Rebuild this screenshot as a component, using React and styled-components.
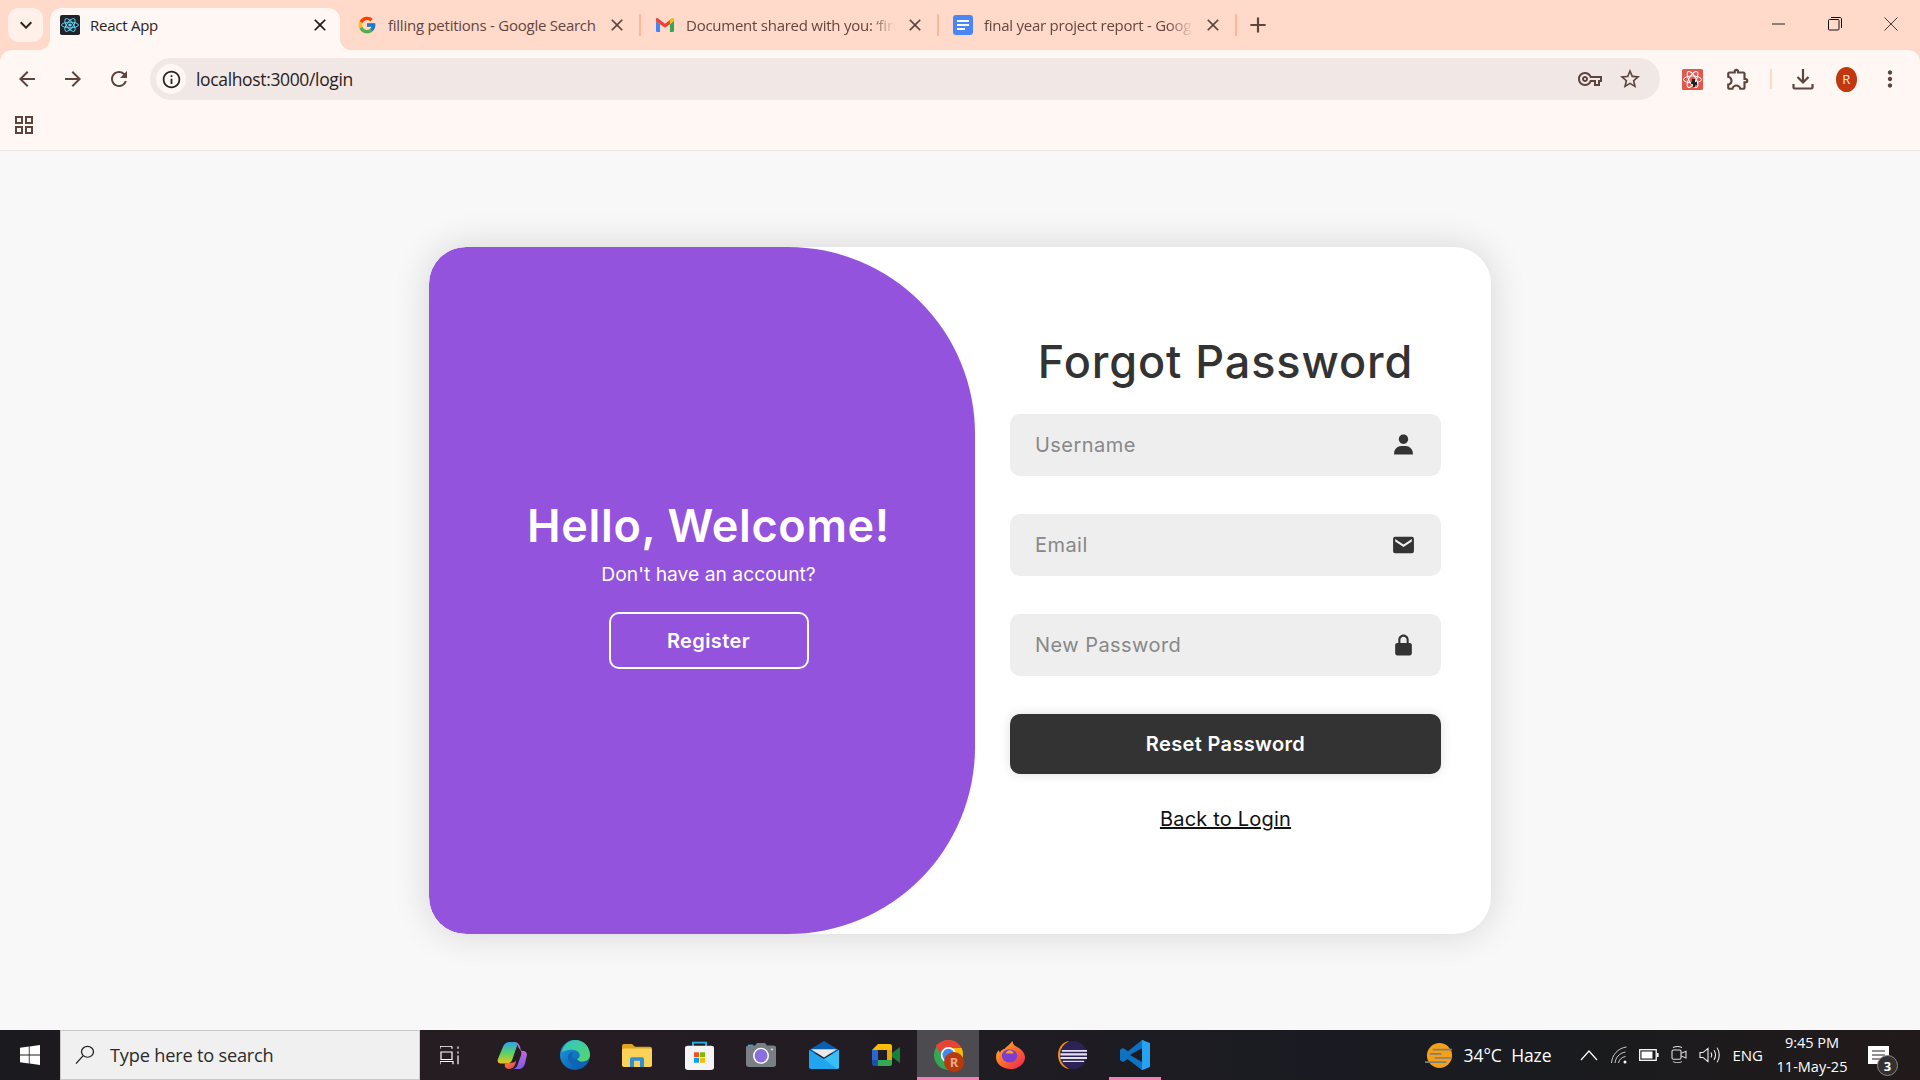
import React from 'react'
import styled, { createGlobalStyle } from 'styled-components'
import { BiSolidUser, BiSolidEnvelope, BiSolidLockAlt } from 'react-icons/bi'
import { FcGoogle } from 'react-icons/fc'
import {
  MdArrowBack, MdArrowForward, MdRefresh, MdInfoOutline, MdStarBorder, MdOutlineExtension,
  MdMoreVert, MdClose, MdAdd, MdOutlineVpnKey, MdKeyboardArrowDown, MdOutlineGridView,
} from 'react-icons/md'

const chromeFont = '"Open Sans", "Noto Sans", sans-serif'
const pageFont = 'Inter, "Open Sans", sans-serif'

const Global = createGlobalStyle`
  html, body { margin: 0; padding: 0; height: 100%; overflow: hidden; }
  * { box-sizing: border-box; }
  input::placeholder { color: #888; opacity: 1; }
`

const Screen = styled.div`
  width: 1920px;
  height: 1080px;
  display: flex;
  flex-direction: column;
  background: #f8f8f8;
  overflow: hidden;
`
const Browser = styled.div`
  background: #ffd9ca;
  flex: none;
`
const TabStrip = styled.div`
  height: 50px;
  display: flex;
  align-items: flex-end;
  padding-left: 8px;
  font-family: ${chromeFont};
`
const TabMenu = styled.div`
  width: 35px;
  height: 34px;
  margin: 0 7px 8px 0;
  border-radius: 10px;
  background: #fff0ea;
  display: flex;
  align-items: center;
  justify-content: center;
  color: #2a2220;
  font-size: 24px;
`
const Tab = styled.div`
  position: relative;
  width: ${p => (p.$active ? '290px' : '298px')};
  height: 42px;
  display: flex;
  align-items: center;
  padding: 0 ${p => (p.$active ? '10px' : '11px')} 8px ${p => (p.$active ? '10px' : '17px')};
  background: ${p => (p.$active ? '#fff7f4' : 'transparent')};
  border-radius: 12px 12px 0 0;
  color: ${p => (p.$active ? '#2a2220' : '#63463e')};
  &::before, &::after {
    content: ${p => (p.$active ? '""' : 'none')};
    position: absolute;
    bottom: 0;
    width: 12px;
    height: 12px;
  }
  &::before { left: -12px; background: radial-gradient(circle at 0 0, transparent 12px, #fff7f4 12.5px); }
  &::after { right: -12px; background: radial-gradient(circle at 100% 0, transparent 12px, #fff7f4 12.5px); }
`
const Favicon = styled.span`
  width: 20px;
  height: 20px;
  flex: none;
  display: flex;
  align-items: center;
  justify-content: center;
`
const TabTitle = styled.span`
  flex: 1;
  min-width: 0;
  margin-left: ${p => (p.$active ? '10px' : '11px')};
  font-size: 15px;
  white-space: nowrap;
  overflow: hidden;
  letter-spacing: -0.25px;
  ${p => p.$fade && `mask-image: linear-gradient(90deg, #000 88%, transparent 100%);`}
`
const TabClose = styled.span`
  flex: none;
  display: flex;
  font-size: 20px;
  margin-left: 10px;
  color: ${p => (p.$active ? '#1c1716' : '#5d443c')};
`
const TabSep = styled.span`
  flex: none;
  width: 2px;
  height: 22px;
  margin: 0 -3px 14px 1px;
  background: #ffb79c;
`
const NewTab = styled.span`
  display: flex;
  font-size: 26px;
  color: #5d443c;
  margin: 0 0 12px 11px;
`
const WindowControls = styled.div`
  margin: 0 0 0 auto;
  align-self: stretch;
  display: flex;
  align-items: center;
  padding: 0 22px 2px 0;
  gap: 42px;
`
const Toolbar = styled.div`
  height: 50px;
  display: flex;
  align-items: center;
  background: #fff7f4;
  border-radius: 12px 12px 0 0;
  padding: 8px 15px 0 15px;
  color: #5d443c;
  font-family: ${chromeFont};
`
const NavIcon = styled.span`
  width: 24px;
  height: 24px;
  margin-right: 22px;
  font-size: 24px;
  display: flex;
  align-items: center;
  justify-content: center;
  &:nth-child(3) { margin-right: 19px; }
`
const Omnibox = styled.div`
  flex: none;
  width: 1510px;
  height: 42px;
  border-radius: 21px;
  background: #f1e7e5;
  display: flex;
  align-items: center;
  padding: 0 18px 0 6px;
`
const InfoBadge = styled.span`
  width: 30px;
  height: 30px;
  border-radius: 50%;
  background: #fff7f4;
  display: flex;
  align-items: center;
  justify-content: center;
  font-size: 21px;
  color: #2a2220;
`
const UrlText = styled.span`
  margin-left: 10px;
  font-size: 17.5px;
  letter-spacing: -0.35px;
  color: #2a2220;
  flex: 1;
`
const OmniIcon = styled.span`
  display: flex;
  font-size: 24px;
  margin-left: 16px;
  color: #5d443c;
`
const ToolIcon = styled.span`
  flex: none;
  width: 30px;
  height: 30px;
  display: flex;
  align-items: center;
  justify-content: center;
  font-size: 26px;
`
const ExtensionBox = styled(ToolIcon)`
  margin-left: 17px;
`
const PuzzleBox = styled(ToolIcon)`
  margin-left: 16px;
`
const ToolSep = styled.span`
  width: 2px;
  height: 20px;
  margin: 0 16px 0 17px;
  background: #ffd9ca;
`
const Avatar = styled.span`
  width: 25px;
  height: 25px;
  margin: 0 18px 0 18px;
  border-radius: 50%;
  background: #c1370f;
  color: #ffe7dc;
  font-size: 13px;
  display: flex;
  align-items: center;
  justify-content: center;
  font-family: ${chromeFont};
`
const BookmarkBar = styled.div`
  height: 51px;
  display: flex;
  align-items: center;
  padding: 0 0 0 12px;
  background: #fff7f4;
  border-bottom: 1px solid #ece4e1;
  color: #5d443c;
  font-size: 24px;
`

const Main = styled.main`
  flex: 1;
  min-height: 0;
  display: flex;
  align-items: center;
  justify-content: center;
  font-family: ${pageFont};
`
const Card = styled.section`
  width: 1062px;
  height: 687px;
  background: #fff;
  border-radius: 37px;
  box-shadow: 0 0 37px rgba(0, 0, 0, 0.14);
  display: flex;
  overflow: hidden;
`
const WelcomePanel = styled.div`
  flex: none;
  width: 546px;
  background: #9353dd;
  border-radius: 37px 187px 187px 37px;
  color: #fff;
  display: flex;
  flex-direction: column;
  align-items: center;
  justify-content: center;
  padding: 0 0 13px 13px;
`
const WelcomeTitle = styled.h1`
  margin: 0;
  font-size: 45px;
  line-height: 54px;
  font-weight: 600;
  letter-spacing: 0.65px;
`
const WelcomeText = styled.p`
  margin: 9px 0 26px;
  font-size: 19.3px;
  line-height: 24px;
`
const OutlineButton = styled.button`
  width: 200px;
  height: 57px;
  border: 2.5px solid #fff;
  border-radius: 10px;
  background: transparent;
  color: #fff;
  font: 600 20px ${pageFont};
  letter-spacing: 0.4px;
`
const FormPanel = styled.form`
  flex: 1;
  padding: 88px 50px 0 35px;
  display: flex;
  flex-direction: column;
  text-align: center;
`
const FormTitle = styled.h1`
  margin: 0 0 25px;
  font-size: 45px;
  line-height: 54px;
  font-weight: 500;
  letter-spacing: 0.9px;
  color: #333;
`
const Field = styled.div`
  position: relative;
  margin-bottom: 38px;
`
const FieldInput = styled.input`
  display: block;
  width: 100%;
  height: 62px;
  border: 0;
  outline: 0;
  border-radius: 10px;
  background: #eee;
  padding: 0 60px 0 25px;
  font: 400 20px ${pageFont};
  letter-spacing: 0.45px;
  color: #333;
`
const FieldIcon = styled.span`
  position: absolute;
  top: 50%;
  right: 25px;
  transform: translateY(-50%);
  display: flex;
  font-size: 25px;
  color: #333;
`
const SubmitButton = styled.button`
  height: 60px;
  border: 0;
  border-radius: 10px;
  background: #333;
  color: #fff;
  font: 600 20px ${pageFont};
  letter-spacing: 0.35px;
  box-shadow: 0 0 12px rgba(0, 0, 0, 0.12);
`
const BackLink = styled.a`
  margin-top: 31px;
  font-size: 20px;
  line-height: 28px;
  letter-spacing: 0.2px;
  color: #111;
  text-decoration: underline;
`

const Taskbar = styled.footer`
  flex: none;
  height: 50px;
  display: flex;
  background: linear-gradient(90deg, #1b1a1f 0%, #261d22 25%, #201c22 50%, #1a1b22 70%, #1b1b1e 85%, #221a1a 100%);
  color: #fff;
  font-family: ${chromeFont};
`
const StartButton = styled.div`
  width: 60px;
  display: flex;
  align-items: center;
  justify-content: center;
`
const SearchBox = styled.div`
  width: 360px;
  margin-right: -1px;
  background: #f0f0f0;
  border: 1px solid #c8c8c8;
  display: flex;
  align-items: center;
  padding-left: 14px;
  color: #2b2b2b;
  font-size: 18.2px;
  letter-spacing: -0.2px;
`
const SearchText = styled.span`
  margin-left: 15px;
`
const AppSlot = styled.div`
  position: relative;
  flex: none;
  width: 62.25px;
  display: flex;
  align-items: center;
  justify-content: center;
  background: ${p => (p.$active ? '#4d4b50' : 'transparent')};
  &::after {
    content: ${p => (p.$active || p.$running ? '""' : 'none')};
    position: absolute;
    bottom: 0;
    left: ${p => (p.$active ? '0' : '5px')};
    right: ${p => (p.$active ? '0' : '5px')};
    height: 3px;
    background: #f47fb4;
  }
`
const ChromeBadge = styled.span`
  position: absolute;
  left: 27px;
  top: 22px;
  width: 20px;
  height: 20px;
  border-radius: 50%;
  background: #b8390c;
  color: #e8a88e;
  font: 700 13px ${chromeFont};
  display: flex;
  align-items: center;
  justify-content: center;
`
const Tray = styled.div`
  margin-left: auto;
  display: flex;
  align-items: center;
  padding-right: 24px;
  font-size: 17.5px;
`
const WeatherText = styled.span`
  margin: 0 23px 0 10px;
  letter-spacing: -0.1px;
  word-spacing: 5px;
  white-space: nowrap;
`
const TrayIcon = styled.span`
  width: 30px;
  display: flex;
  justify-content: center;
`
const Lang = styled.span`
  margin-left: 8px;
  font-size: 15px;
`
const Clock = styled.div`
  margin: 0 20px 0 13px;
  width: 72px;
  font-size: 14.5px;
  line-height: 24px;
  text-align: center;
  white-space: nowrap;
`
const Notify = styled.div`
  position: relative;
  width: 28px;
  display: flex;
`
const NotifyCount = styled.span`
  position: absolute;
  left: 9px;
  top: 9px;
  width: 21px;
  height: 21px;
  border-radius: 50%;
  background: #33302f;
  border: 1px solid #8a8a8a;
  font: 700 13px ${chromeFont};
  display: flex;
  align-items: center;
  justify-content: center;
`

const ReactIcon = () => (
  <svg width="20" height="20" viewBox="0 0 20 24" preserveAspectRatio="none">
    <rect width="20" height="24" rx="2" fill="#20232a" />
    <g fill="none" stroke="#61dafb" strokeWidth="1">
      <ellipse cx="10" cy="12" rx="8.5" ry="3.4" />
      <ellipse cx="10" cy="12" rx="8.5" ry="3.4" transform="rotate(60 10 12)" />
      <ellipse cx="10" cy="12" rx="8.5" ry="3.4" transform="rotate(120 10 12)" />
    </g>
    <circle cx="10" cy="12" r="1.8" fill="#61dafb" />
  </svg>
)
const GmailIcon = () => (
  <svg width="18" height="14" viewBox="0 0 20 16" preserveAspectRatio="none">
    <path d="M0 3v11.5C0 15.3.7 16 1.5 16H4.5V7z" fill="#4285f4" />
    <path d="M20 3v11.5c0 .8-.7 1.5-1.5 1.5h-3V7z" fill="#34a853" />
    <path d="M15.5 7V1.5L18 .3c.9-.6 2-.1 2 1.2V3z" fill="#fbbc04" />
    <path d="M4.5 7 0 3V1.5C0 .2 1.1-.3 2 .3L10 6.5 18 .3 15.5 2V7L10 11z" fill="#ea4335" />
  </svg>
)
const DocsIcon = () => (
  <svg width="20" height="20" viewBox="0 0 20 20">
    <rect width="20" height="20" rx="3" fill="#4a86f5" />
    <path d="M4 5h12v2H4zM4 9h12v2H4zM4 13h8v2H4z" fill="#fff" />
  </svg>
)
const Minimize = () => (
  <svg width="14" height="14" viewBox="0 0 14 14"><path d="M0 7h13" stroke="#222" strokeWidth="1" /></svg>
)
const Restore = () => (
  <svg width="14" height="14" viewBox="0 0 14 14" fill="none" stroke="#111" strokeWidth="1">
    <rect x=".5" y="2.5" width="10.5" height="10.5" rx="1" />
    <path d="M3 .5h9c.8 0 1.5.7 1.5 1.5v9" />
  </svg>
)
const CloseX = () => (
  <svg width="14" height="14" viewBox="0 0 14 14"><path d="M.5.5l13 13M13.5.5l-13 13" stroke="#4b3832" strokeWidth="1" /></svg>
)
const AtomExtension = () => (
  <svg width="21" height="21" viewBox="0 0 21 21">
    <rect width="21" height="21" rx="1.5" fill="#e2574c" />
    <g fill="none" stroke="#fff" strokeWidth="1">
      <ellipse cx="10.5" cy="10.5" rx="9" ry="3.5" />
      <ellipse cx="10.5" cy="10.5" rx="9" ry="3.5" transform="rotate(60 10.5 10.5)" />
      <ellipse cx="10.5" cy="10.5" rx="9" ry="3.5" transform="rotate(120 10.5 10.5)" />
    </g>
    <path d="M10 10h3v3h2v3h-2v2h-2v-3h-2v-2h1z" fill="#222" />
  </svg>
)
const DownloadIcon = () => (
  <svg width="22" height="22" viewBox="0 0 22 22" fill="none" stroke="#5d443c" strokeWidth="2.2">
    <path d="M11 1v13M5.5 9 11 14.5 16.5 9" />
    <path d="M1.5 16v3.5c0 .5.5 1 1 1h17c.5 0 1-.5 1-1V16" />
  </svg>
)
const WindowsLogo = () => (
  <svg width="20" height="20" viewBox="0 0 20 20" fill="#fff">
    <path d="M0 2.8 8.8 1.500v8H0zM9.600 1.400 20 0v9.500H9.600zM0 10.400h8.800v8.100L0 17.200zM9.600 10.400H20V20L9.600 18.600z" />
  </svg>
)
const SearchGlass = () => (
  <svg width="20" height="20" viewBox="0 0 20 22" fill="none" stroke="#222" strokeWidth="1.3" preserveAspectRatio="none">
    <circle cx="12.5" cy="7.5" r="6" />
    <path d="M8 12 1 20.5" />
  </svg>
)
const TaskView = () => (
  <svg width="20" height="19" viewBox="0 0 20 24" fill="none" stroke="#fff" strokeWidth="1.2" preserveAspectRatio="none">
    <path d="M0 .5h12M12 .5v3M0 .5v3M1 7.5h11v9.500H1zM0 21v-1.500h13V23M0 19.500V23M18 .5v3M18 7v2.500M18 12v11" />
  </svg>
)
const Copilot = () => (
  <svg width="30" height="27" viewBox="0 0 30 34" preserveAspectRatio="none">
    <defs>
      <linearGradient id="cp1" x1="0" y1="0" x2="0" y2="1"><stop offset="0" stopColor="#2aa7e8" /><stop offset=".55" stopColor="#5fd35f" /><stop offset="1" stopColor="#f2c21b" /></linearGradient>
      <linearGradient id="cp2" x1="0" y1="0" x2="0" y2="1"><stop offset="0" stopColor="#e86cd2" /><stop offset="1" stopColor="#7c5ce8" /></linearGradient>
      <linearGradient id="cp3" x1="0" y1="0" x2="1" y2="1"><stop offset="0" stopColor="#f58a2a" /><stop offset="1" stopColor="#e63a6a" /></linearGradient>
    </defs>
    <path d="M12 0h5c3 0 3 3 3 5l-5 18c-1 3-3 4-6 4H4c-3 0-4-3-3-6L6 6c1-3 3-6 6-6z" fill="url(#cp1)" />
    <path d="M17 0c3 0 5 2 6 6l1 5 1 0c3 0 5 2 5 5l-2 11c-1 4-3 7-7 7h-6c3 0 5-2 6-7l3-10c1-4 0-6-2-9-1-3-3-8-5-8z" fill="url(#cp2)" />
    <path d="M8 27l7-1c3 0 4-3 4-3s0 5-2 8c-1 2-3 3-5 3-3 0-5-2-4-7z" fill="url(#cp3)" />
  </svg>
)
const EdgeIcon = () => (
  <svg width="30" height="30" viewBox="0 0 32 36" preserveAspectRatio="none">
    <defs>
      <linearGradient id="eg1" x1="0" y1="0" x2="1" y2="1"><stop offset="0" stopColor="#2fc5c5" /><stop offset="1" stopColor="#58d66a" /></linearGradient>
      <linearGradient id="eg2" x1="0" y1="0" x2="1" y2="1"><stop offset="0" stopColor="#1b9de2" /><stop offset="1" stopColor="#0c4f9e" /></linearGradient>
    </defs>
    <ellipse cx="16" cy="18" rx="16" ry="18" fill="url(#eg2)" />
    <path d="M2 15C4 5 10 0 16 0c9 0 16 8 16 18 0 5-4 8-9 8-3 0-5-2-5-3 3-2 4-4 2-8-2-3-6-4-10-3-4 0-7 2-8 3z" fill="url(#eg1)" />
    <path d="M18 23c-6 0-7-6-3-9-5 0-8 5-6 11 2 5 8 8 14 7 2 0 5-2 7-5-3 2-8 0-12-4z" fill="#0f64b8" />
  </svg>
)
const FolderIcon = () => (
  <svg width="30" height="23" viewBox="0 0 30 26" preserveAspectRatio="none">
    <path d="M0 2c0-1 1-2 2-2h8l3 3h15c1 0 2 1 2 2v3H0z" fill="#e0a21c" />
    <rect y="5" width="30" height="21" rx="2" fill="#fbd258" />
    <path d="M8 26v-9c0-1 1-2 2-2h10c1 0 2 1 2 2v9h-4v-7h-6v7z" fill="#2e8fd6" />
  </svg>
)
const StoreIcon = () => (
  <svg width="29" height="29" viewBox="0 0 29 36" preserveAspectRatio="none">
    <path d="M8 8V2h13v6" fill="none" stroke="#26b3e3" strokeWidth="2" />
    <rect y="6" width="29" height="30" rx="3" fill="#f4f4f4" />
    <rect x="9" y="14" width="5" height="6" fill="#f25022" />
    <rect x="15" y="14" width="5" height="6" fill="#7fba00" />
    <rect x="9" y="21" width="5" height="6" fill="#00a4ef" />
    <rect x="15" y="21" width="5" height="6" fill="#ffb900" />
  </svg>
)
const CameraIcon = () => (
  <svg width="30" height="24" viewBox="0 0 30 30" preserveAspectRatio="none">
    <path d="M9 3l2-3h8l2 3h6c2 0 3 1 3 3v21c0 2-1 3-3 3H3c-2 0-3-1-3-3V6c0-2 1-3 3-3z" fill="#7a7f85" />
    <rect x="2" y="2" width="5" height="2" fill="#2aa8e0" />
    <ellipse cx="15" cy="16" rx="8" ry="10" fill="#fff" />
    <ellipse cx="15" cy="16" rx="6.5" ry="8.5" fill="#8a6fe0" />
    <circle cx="26" cy="8" r="1.2" fill="#ddd" />
  </svg>
)
const MailIcon = () => (
  <svg width="30" height="28" viewBox="0 0 30 34" preserveAspectRatio="none">
    <path d="M15 0 30 11v4H0v-4z" fill="#0a5fb0" />
    <path d="M2 10h26L15 20z" fill="#e8e8e8" />
    <path d="M0 11l15 11 15-11v21c0 1-1 2-2 2H2c-1 0-2-1-2-2z" fill="#21a5ee" />
    <path d="M15 22 30 11v21c0 1-1 2-2 2z" fill="#37c0f5" />
  </svg>
)
const MeetIcon = () => (
  <svg width="28" height="22" viewBox="0 0 28 22">
    <path d="M6 0h12c1 0 2 1 2 2v4H0z" fill="#fbbc04" />
    <path d="M0 6h6v10H0z" fill="#2a67d0" />
    <path d="M0 16h6v6H2c-1 0-2-1-2-2z" fill="#1d4fa8" />
    <path d="M6 16h14v4c0 1-1 2-2 2H6z" fill="#34a853" />
    <path d="M15 6h5v10h-5z" fill="#e9a500" />
    <path d="M20 9l8-6v16l-8-6z" fill="#188038" />
  </svg>
)
const ChromeIcon = () => (
  <svg width="29" height="30" viewBox="0 0 30 36" preserveAspectRatio="none">
    <ellipse cx="15" cy="18" rx="15" ry="18" fill="#34a853" />
    <path d="M15 0c6 0 11 4 13.5 9.5H15C11 9.5 7 12 6 16L2 7C5 3 10 0 15 0z" fill="#ea4335" />
    <path d="M28.5 9.500C30 13 30 17 30 18c0 9-7 18-15 18l6-12c1-2 2-4 1-7-.5-3-2-6-4-7.500z" fill="#fbbc04" />
    <ellipse cx="15" cy="18" rx="8" ry="9.5" fill="#fff" />
    <ellipse cx="15" cy="18" rx="6.2" ry="7.5" fill="#4285f4" />
  </svg>
)
const FirefoxIcon = () => (
  <svg width="29" height="28" viewBox="0 0 30 36" preserveAspectRatio="none">
    <defs>
      <linearGradient id="ff1" x1="0" y1="0" x2="1" y2="1"><stop offset="0" stopColor="#ffbd2e" /><stop offset=".5" stopColor="#ff6a2a" /><stop offset="1" stopColor="#e8215e" /></linearGradient>
    </defs>
    <path d="M17 0c1 3 0 4 4 7 5 3 9 8 9 14 0 9-7 15-15 15S0 30 0 21c0-4 1-7 3-9l1 3c1-3 3-4 5-5 2-3 5-5 8-10z" fill="url(#ff1)" />
    <ellipse cx="14" cy="19" rx="8" ry="8.5" fill="#7a3ed0" />
    <path d="M14 12c3 0 4 2 4 4h-8c1-2 2-4 4-4z" fill="#ff9a2a" />
  </svg>
)
const EclipseIcon = () => (
  <svg width="29" height="28" viewBox="0 0 30 34" preserveAspectRatio="none">
    <path d="M12 0C4 1 0 9 0 17s4 16 12 17C6 30 3 24 3 17S6 4 12 0z" fill="#f29111" />
    <ellipse cx="16" cy="17" rx="14" ry="17" fill="#2c2255" />
    <path d="M4 11h26v2H4zM2.5 15h27.500v2.500H2.500zM2.500 19.500H30V22H2.500zM5 24h22v1.500H5z" fill="#e4e1ef" />
  </svg>
)
const VSCodeIcon = () => (
  <svg width="30" height="30" viewBox="0 0 30 37" preserveAspectRatio="none">
    <path d="M22 0 30 4v29l-8 4-14-15 14 10z" fill="#1f9cf0" />
    <path d="M22 0 8 14l-5-4-3 2v13l3 2 5-4-1 0L22 37V27L10 18.5 22 10z" fill="#0e72c3" />
    <path d="M22 0v37l8-4V4z" fill="#25a3f2" />
  </svg>
)
const WeatherIcon = () => (
  <svg width="29" height="25" viewBox="0 0 30 30" preserveAspectRatio="none">
    <ellipse cx="15" cy="15" rx="13" ry="15" fill="#f6a015" />
    <path d="M8 7h20v2H8zM5 12h12v2H5zM10 17h18v2H10zM0 22h22v2H0z" fill="#7f7f7f" />
  </svg>
)
const Chevron = () => (
  <svg width="18" height="11" viewBox="0 0 18 11" fill="none" stroke="#fff" strokeWidth="1.2"><path d="M1 10 9 1l8 9" /></svg>
)
const Wifi = () => (
  <svg width="16" height="18" viewBox="0 0 16 18" fill="none" stroke="#ccc" strokeWidth="1">
    <path d="M.5 17C1 9 7 2 15.5 1M4 17c.5-5 4-10 10.5-11M7.5 17c.5-3 3-6 7-6.5" />
    <circle cx="14" cy="16" r="1.5" fill="#fff" stroke="none" />
  </svg>
)
const Battery = () => (
  <svg width="20" height="12" viewBox="0 0 20 12">
    <rect x=".7" y=".7" width="16.5" height="10.6" fill="none" stroke="#fff" strokeWidth="1.3" />
    <rect x="2.5" y="2.5" width="11" height="7" fill="#fff" />
    <rect x="18" y="4" width="1.6" height="4" fill="#fff" />
  </svg>
)
const MeetNow = () => (
  <svg width="16" height="20" viewBox="0 0 16 24" fill="none" stroke="#ddd" strokeWidth="1.1" preserveAspectRatio="none">
    <rect x="1" y="6" width="9" height="11" rx="1.5" />
    <path d="M10 10l5-2.500v8L10 13M2 3c3-1.500 6-1.500 9 0M2 20c3 1.500 6 1.500 9 0" />
  </svg>
)
const Volume = () => (
  <svg width="21" height="18" viewBox="0 0 21 22" fill="none" stroke="#eee" strokeWidth="1.1" preserveAspectRatio="none">
    <path d="M1 8h3l5-5v16l-5-5H1zM12 8c1 2 1 4 0 6M15 5c2 4 2 8 0 12M18 2c3 5 3 13 0 18" />
  </svg>
)
const NotifyGlyph = () => (
  <svg width="21" height="18" viewBox="0 0 21 18">
    <path d="M0 0h21v18H0z" fill="#fff" />
    <path d="M4 5h13M4 9h13M4 13h9" stroke="#222" strokeWidth="1.2" />
  </svg>
)

const tabs = [
  { title: 'filling petitions - Google Search', icon: <FcGoogle size={20} /> },
  { title: 'Document shared with you: ‘fina', icon: <GmailIcon />, fade: true },
  { title: 'final year project report - Googl', icon: <DocsIcon />, fade: true },
]

const apps = [
  { icon: <TaskView /> },
  { icon: <Copilot /> },
  { icon: <EdgeIcon /> },
  { icon: <FolderIcon /> },
  { icon: <StoreIcon /> },
  { icon: <CameraIcon /> },
  { icon: <MailIcon /> },
  { icon: <MeetIcon /> },
  { icon: <ChromeIcon />, active: true, badge: 'R' },
  { icon: <FirefoxIcon /> },
  { icon: <EclipseIcon /> },
  { icon: <VSCodeIcon />, running: true },
]

const fields = [
  { placeholder: 'Username', type: 'text', icon: <BiSolidUser /> },
  { placeholder: 'Email', type: 'email', icon: <BiSolidEnvelope /> },
  { placeholder: 'New Password', type: 'password', icon: <BiSolidLockAlt /> },
]

const App = () => {
  return (
    <Screen>
      <Global />
      <Browser>
        <TabStrip>
          <TabMenu><MdKeyboardArrowDown /></TabMenu>
          <Tab $active>
            <Favicon><ReactIcon /></Favicon>
            <TabTitle $active>React App</TabTitle>
            <TabClose $active><MdClose /></TabClose>
          </Tab>
          {tabs.map(tab => (
            <React.Fragment key={tab.title}>
              <Tab>
                <Favicon>{tab.icon}</Favicon>
                <TabTitle $fade={tab.fade}>{tab.title}</TabTitle>
                <TabClose><MdClose /></TabClose>
              </Tab>
              <TabSep />
            </React.Fragment>
          ))}
          <NewTab><MdAdd /></NewTab>
          <WindowControls>
            <Minimize />
            <Restore />
            <CloseX />
          </WindowControls>
        </TabStrip>
        <Toolbar>
          <NavIcon><MdArrowBack /></NavIcon>
          <NavIcon><MdArrowForward /></NavIcon>
          <NavIcon><MdRefresh /></NavIcon>
          <Omnibox>
            <InfoBadge><MdInfoOutline /></InfoBadge>
            <UrlText>localhost:3000/login</UrlText>
            <OmniIcon><MdOutlineVpnKey /></OmniIcon>
            <OmniIcon><MdStarBorder /></OmniIcon>
          </Omnibox>
          <ExtensionBox><AtomExtension /></ExtensionBox>
          <PuzzleBox><MdOutlineExtension /></PuzzleBox>
          <ToolSep />
          <ToolIcon><DownloadIcon /></ToolIcon>
          <Avatar>R</Avatar>
          <ToolIcon><MdMoreVert /></ToolIcon>
        </Toolbar>
        <BookmarkBar><MdOutlineGridView /></BookmarkBar>
      </Browser>

      <Main>
        <Card>
          <WelcomePanel>
            <WelcomeTitle>Hello, Welcome!</WelcomeTitle>
            <WelcomeText>Don't have an account?</WelcomeText>
            <OutlineButton type="button">Register</OutlineButton>
          </WelcomePanel>
          <FormPanel>
            <FormTitle>Forgot Password</FormTitle>
            {fields.map(field => (
              <Field key={field.placeholder}>
                <FieldInput type={field.type} placeholder={field.placeholder} />
                <FieldIcon>{field.icon}</FieldIcon>
              </Field>
            ))}
            <SubmitButton type="button">Reset Password</SubmitButton>
            <BackLink href="#">Back to Login</BackLink>
          </FormPanel>
        </Card>
      </Main>

      <Taskbar>
        <StartButton><WindowsLogo /></StartButton>
        <SearchBox>
          <SearchGlass />
          <SearchText>Type here to search</SearchText>
        </SearchBox>
        {apps.map((app, i) => (
          <AppSlot key={i} $active={app.active} $running={app.running}>
            {app.icon}
            {app.badge && <ChromeBadge>{app.badge}</ChromeBadge>}
          </AppSlot>
        ))}
        <Tray>
          <WeatherIcon />
          <WeatherText>34°C Haze</WeatherText>
          <TrayIcon><Chevron /></TrayIcon>
          <TrayIcon><Wifi /></TrayIcon>
          <TrayIcon><Battery /></TrayIcon>
          <TrayIcon><MeetNow /></TrayIcon>
          <TrayIcon><Volume /></TrayIcon>
          <Lang>ENG</Lang>
          <Clock>9:45 PM<br />11-May-25</Clock>
          <Notify>
            <NotifyGlyph />
            <NotifyCount>3</NotifyCount>
          </Notify>
        </Tray>
      </Taskbar>
    </Screen>
  )
}

export default App
